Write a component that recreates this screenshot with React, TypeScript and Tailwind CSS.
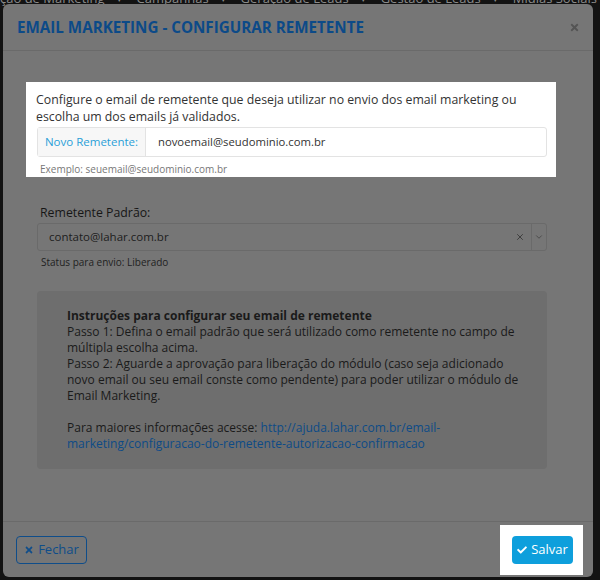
import { FaTimes, FaCheck } from 'react-icons/fa'
import { X, ChevronDown } from 'lucide-react'

const navItems = ['ção de Marketing', 'Campanhas', 'Geração de Leads', 'Gestão de Leads', 'Mídias Sociais', 'Relatórios']

export default function App() {
  return (
    <div
      className="relative w-[600px] h-[580px] overflow-hidden bg-[#131313]"
      style={{ fontFamily: '"Open Sans", "Noto Sans", sans-serif' }}
    >
      {/* page nav behind the modal */}
      <div className="absolute left-0 top-[-11px] flex items-center whitespace-nowrap text-[13px] text-[#8a8a8a]">
        {navItems.map((item, i) => (
          <div key={item} className={`flex items-center ${i === 0 ? '' : 'ml-[15px]'}`}>
            <span>{item}</span>
            <span className="ml-[12px] text-[9px]">▾</span>
          </div>
        ))}
      </div>

      {/* modal */}
      <div className="absolute left-[3px] top-[4px] w-[590px] h-[573px] rounded-[6px] bg-[#767676] flex flex-col">
        <div className="h-[47px] shrink-0 flex items-center justify-between pl-[14px] pr-[13px] border-b border-[#6a6a6a]">
          <h2 className="text-[15.2px] font-bold uppercase text-[#0c4a88]">
            Email Marketing - Configurar Remetente
          </h2>
          <FaTimes className="text-[11px] text-[#545454]" />
        </div>

        <div className="flex-1 pl-[23px] pr-[37px] pt-[31px]">
          <div className="bg-white pl-[10px] pr-[9px] pt-[9px] pb-[1px]">
            <p className="text-[12.3px] leading-[17px] text-[#333]">
              Configure o email de remetente que deseja utilizar no envio dos email marketing ou escolha um dos emails já validados.
            </p>
            <div className="mt-[2px] ml-[1px] flex h-[30px] rounded-[3px] border border-[#e3e3e3]">
              <div className="w-[108px] shrink-0 flex items-center justify-center whitespace-nowrap bg-[#f7f7f7] border-r border-[#e3e3e3] text-[11.5px] text-[#2a9fd8]">
                Novo Remetente:
              </div>
              <div className="flex-1 flex items-center pl-[12px] text-[11.3px] text-[#333]">novoemail@seudominio.com.br</div>
            </div>
            <div className="mt-[5px] pl-[4px] text-[10px] leading-[14px] text-[#777]">
              Exemplo: seuemail@seudominio.com.br
            </div>
          </div>

          <div className="mt-[27px] pl-[11px] pr-[9px]">
            <div className="pl-[3px] text-[12.3px] leading-[17px] text-[#161616]">Remetente Padrão:</div>
            <div className="mt-[2px] flex h-[28px] rounded-[3px] border border-[#6a6a6a] text-[11.5px] text-[#1d1d1d]">
              <div className="flex-1 flex items-center pl-[11px]">contato@lahar.com.br</div>
              <div className="w-[22px] flex items-center justify-center text-[#3a3a3a]">
                <X size={10} strokeWidth={2.2} />
              </div>
              <div className="w-[15px] flex items-center justify-center border-l border-[#6a6a6a] text-[#454545]">
                <ChevronDown size={10} strokeWidth={2} />
              </div>
            </div>
            <div className="mt-[4px] pl-[4px] text-[10px] leading-[14px] text-[#1f1f1f]">Status para envio: Liberado</div>

            <div className="mt-[22px] rounded-[4px] bg-[#6e6e6e] pl-[30px] pr-[20px] pt-[17px] pb-[17px] text-[12px] leading-[16px] text-[#1a1a1a]">
              <div className="font-bold">Instruções para configurar seu email de remetente</div>
              <div>Passo 1: Defina o email padrão que será utilizado como remetente no campo de múltipla escolha acima.</div>
              <div>
                Passo 2: Aguarde a aprovação para liberação do módulo (caso seja adicionado novo email ou seu email conste como pendente) para poder utilizar o módulo de Email Marketing.
              </div>
              <div className="mt-[16px]">
                Para maiores informações acesse:{' '}
                <span className="text-[#0d4b87]">http://ajuda.lahar.com.br/email-marketing/configuracao-do-remetente-autorizacao-confirmacao</span>
              </div>
            </div>
          </div>
        </div>

        <div className="h-[56px] shrink-0 flex items-center justify-between pl-[13px] pr-[10px] border-t border-[#6a6a6a]">
          <button className="h-[28px] w-[71px] flex items-center justify-center gap-[4px] rounded-[4px] border border-[#0f4d8a] text-[13px] text-[#0f4d8a]">
            <FaTimes className="text-[10px]" />
            Fechar
          </button>
          <div className="bg-white pl-[12px] pr-[10px] py-[11px]">
            <button className="h-[28px] w-[61px] flex items-center justify-center gap-[4px] rounded-[4px] bg-[#0e9fdc] text-[13px] text-white">
              <FaCheck className="text-[10px]" />
              Salvar
            </button>
          </div>
        </div>
      </div>
    </div>
  )
}
